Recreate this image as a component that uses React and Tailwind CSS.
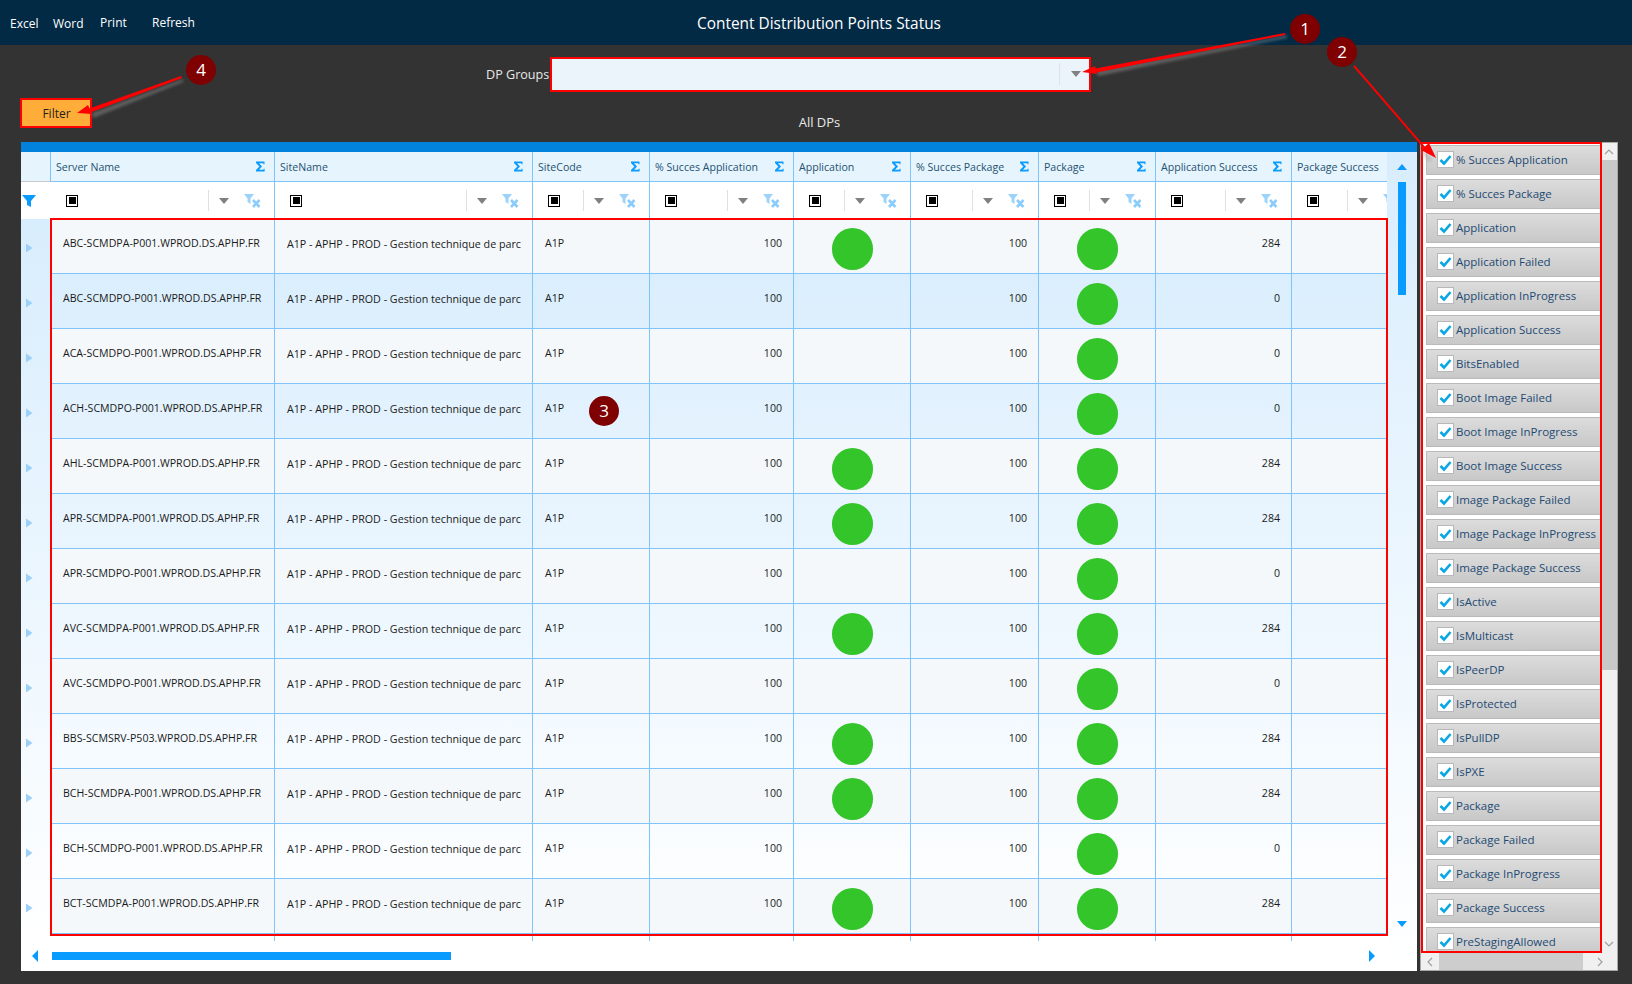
import React from "react";

const font = "font-['Open_Sans','Noto_Sans',sans-serif]";

const columns = [
  { name: "Server Name", width: "w-[224px]" },
  { name: "SiteName", width: "w-[258px]" },
  { name: "SiteCode", width: "w-[117px]" },
  { name: "% Succes Application", width: "w-[144px]" },
  { name: "Application", width: "w-[117px]" },
  { name: "% Succes Package", width: "w-[128px]" },
  { name: "Package", width: "w-[117px]" },
  { name: "Application Success", width: "w-[136px]" },
  { name: "Package Success", width: "w-[95px]", clip: true },
];

const servers = [
  ["ABC-SCMDPA-P001.WPROD.DS.APHP.FR", true, 284],
  ["ABC-SCMDPO-P001.WPROD.DS.APHP.FR", false, 0],
  ["ACA-SCMDPO-P001.WPROD.DS.APHP.FR", false, 0],
  ["ACH-SCMDPO-P001.WPROD.DS.APHP.FR", false, 0],
  ["AHL-SCMDPA-P001.WPROD.DS.APHP.FR", true, 284],
  ["APR-SCMDPA-P001.WPROD.DS.APHP.FR", true, 284],
  ["APR-SCMDPO-P001.WPROD.DS.APHP.FR", false, 0],
  ["AVC-SCMDPA-P001.WPROD.DS.APHP.FR", true, 284],
  ["AVC-SCMDPO-P001.WPROD.DS.APHP.FR", false, 0],
  ["BBS-SCMSRV-P503.WPROD.DS.APHP.FR", true, 284],
  ["BCH-SCMDPA-P001.WPROD.DS.APHP.FR", true, 284],
  ["BCH-SCMDPO-P001.WPROD.DS.APHP.FR", false, 0],
  ["BCT-SCMDPA-P001.WPROD.DS.APHP.FR", true, 284],
];

const choices = [
  "% Succes Application",
  "% Succes Package",
  "Application",
  "Application Failed",
  "Application InProgress",
  "Application Success",
  "BitsEnabled",
  "Boot Image Failed",
  "Boot Image InProgress",
  "Boot Image Success",
  "Image Package Failed",
  "Image Package InProgress",
  "Image Package Success",
  "IsActive",
  "IsMulticast",
  "IsPeerDP",
  "IsProtected",
  "IsPullDP",
  "IsPXE",
  "Package",
  "Package Failed",
  "Package InProgress",
  "Package Success",
  "PreStagingAllowed",
];

function Sigma() {
  return (
    <svg width="11" height="11" viewBox="0 0 11 11" className="shrink-0">
      <path d="M1 0.500h8.500v2.700H8.600L8.200 2.300H4l3 3.200-3 3.200h4.300l.4-.9h.9V10.500H1V9l3.400-3.500L1 2z" fill="#0a9bff" />
    </svg>
  );
}

function ClearFilter() {
  return (
    <svg width="18" height="14" viewBox="0 0 18 14" className="shrink-0">
      <path d="M0 0h10L6.500 4.500V10L3.500 8V4.500z" fill="#9bd3fb" />
      <path d="M9 6l6.500 7M15.500 6L9 13" stroke="#8cccfa" strokeWidth="2.600" />
    </svg>
  );
}

function Arrow({ dir, size = "w-3 h-3", color = "#0a9bff" }) {
  const pts = {
    up: "1,9 11,9 6,3",
    down: "1,3 11,3 6,9",
    left: "9,0 9,12 3,6",
    right: "3,0 3,12 9,6",
  };
  return (
    <svg viewBox="0 0 12 12" className={size}>
      <polygon points={pts[dir]} fill={color} />
    </svg>
  );
}

function Marker({ n, className }) {
  return (
    <div className={`absolute w-[30px] h-[30px] rounded-full bg-[#7f0000] text-white text-[17px] flex items-center justify-center ${className}`}>
      {n}
    </div>
  );
}

function HeaderCell({ col }) {
  return (
    <div className={`${col.width} shrink-0 h-[29px] flex items-center justify-between pl-[5px] pr-[8px] border-r border-[#7fc4fa] overflow-hidden last:border-r-0`}>
      <span className="text-[10.6px] text-[#25526f] whitespace-nowrap pt-[3px]">{col.name}</span>
      {!col.clip && <Sigma />}
    </div>
  );
}

function FilterCell({ col }) {
  return (
    <div className={`${col.width} shrink-0 h-[37px] flex items-center pl-[15px] border-r border-[#7fc4fa] overflow-hidden last:border-r-0`}>
      <div className="w-[12px] h-[12px] border-[1.5px] border-black p-[1.5px] shrink-0">
        <div className="w-full h-full bg-black" />
      </div>
      <div className="flex-1 min-w-0" />
      <div className="w-px h-[21px] bg-[#e0e0e0] shrink-0" />
      <div className="w-[35px] flex pl-[9px] shrink-0">
        <Arrow dir="down" size="w-[12px] h-[12px]" color="#808080" />
      </div>
      <div className={`${col.clip ? "w-[4px]" : "w-[30px]"} shrink-0 overflow-hidden`}>
        <ClearFilter />
      </div>
    </div>
  );
}

function Row({ row, odd }) {
  const [server, hasApp, success] = row;
  return (
    <div className={`flex h-[55px] shrink-0 border-b border-[#7fc4fa] text-[10.6px] text-[#1a1a1a] ${odd ? "bg-[#f4f8fa]" : ""}`}>
      <div className="w-[224px] shrink-0 border-r border-[#7fc4fa] pl-[12px] pt-[17px] whitespace-nowrap">{server}</div>
      <div className="w-[258px] shrink-0 border-r border-[#7fc4fa] pl-[12px] pt-[17px] whitespace-nowrap text-[10.7px]">A1P - APHP - PROD - Gestion technique de parc</div>
      <div className="w-[117px] shrink-0 border-r border-[#7fc4fa] pl-[12px] pt-[17px]">A1P</div>
      <div className="w-[144px] shrink-0 border-r border-[#7fc4fa] pr-[11px] pt-[17px] text-right">100</div>
      <div className="w-[117px] shrink-0 border-r border-[#7fc4fa] flex justify-center pt-[9px]">
        {hasApp && <div className="w-[41px] h-[42px] rounded-full bg-[#33c52a]" />}
      </div>
      <div className="w-[128px] shrink-0 border-r border-[#7fc4fa] pr-[11px] pt-[17px] text-right">100</div>
      <div className="w-[117px] shrink-0 border-r border-[#7fc4fa] flex justify-center pt-[9px]">
        <div className="w-[41px] h-[42px] rounded-full bg-[#33c52a]" />
      </div>
      <div className="w-[136px] shrink-0 border-r border-[#7fc4fa] pr-[11px] pt-[17px] text-right">{success}</div>
      <div className="w-[95px] shrink-0" />
    </div>
  );
}

function Choice({ label }) {
  return (
    <div className="h-[30px] shrink-0 mb-[4px] bg-gradient-to-b from-[#dcdcdc] to-[#c8c8c8] border border-[#bababa] flex items-center pl-[10px]">
      <div className="w-[17px] h-[17px] -mt-[1px] bg-white border border-[#b8b8b8] flex items-center justify-center shrink-0">
        <svg width="13" height="13" viewBox="0 0 13 13">
          <path d="M1.500 7l3.500 3.500L11.500 3" stroke="#08a6e4" strokeWidth="2.600" fill="none" />
        </svg>
      </div>
      <span className="ml-[2px] text-[11.5px] text-[#1d4a73] whitespace-nowrap">{label}</span>
    </div>
  );
}

export default function App() {
  return (
    <div className={`relative w-[1632px] h-[984px] bg-[#333333] overflow-hidden ${font}`}>
      {/* top bar */}
      <div className="h-[45px] bg-[#022a45] relative flex items-center justify-center pl-[6px] pt-[2px]">
        <div className="absolute left-[10px] top-[15px] flex items-start text-[12px] text-white">
          <span className="w-[43px]">Excel</span>
          <span className="w-[47px]">Word</span>
          <span className="w-[52px] -mt-[1px]">Print</span>
          <span className="-mt-[1px]">Refresh</span>
        </div>
        <span className="text-[15.4px] text-white">Content Distribution Points Status</span>
      </div>

      {/* dp groups */}
      <div className="flex items-start h-[46px] pt-[12px] pl-[486px]">
        <span className="w-[63px] mt-[9px] text-[12.6px] text-[#e8e8e8] whitespace-nowrap">DP Groups</span>
        <div className="ml-[1px] w-[540px] h-[34px] bg-[#ecf4fb] border-l border-white flex items-center justify-end pr-[8px]">
          <div className="w-px h-[22px] bg-[#dde2e6] mr-[10px]" />
          <Arrow dir="down" size="w-[12px] h-[12px]" color="#808080" />
        </div>
      </div>

      {/* filter + title */}
      <div className="relative h-[51px]">
        <button className="absolute left-[21px] top-[9px] w-[71px] h-[28px] bg-[#ffad39] text-[12px] text-[#222]">Filter</button>
        <div className="pt-[22px] pl-[7px] text-center text-[13px] text-[#e8e8e8]">All DPs</div>
      </div>

      <div className="flex pl-[21px] h-[829px]">
        {/* grid */}
        <div className="w-[1396px] h-full bg-white flex flex-col relative">
          <div className="h-[10px] bg-[#0382dd] shrink-0" />
          <div className="flex-1 flex min-h-0">
            <div className="w-[1366px] flex flex-col">
              <div className="flex bg-[#e6f4fe] border-b border-[#7fc4fa] shrink-0 h-[30px]">
                <div className="w-[30px] h-[30px] shrink-0 border-r border-[#7fc4fa] border-b border-b-[#c8c8c8]" />
                {columns.map((c) => (
                  <HeaderCell key={c.name} col={c} />
                ))}
              </div>
              <div className="flex shrink-0 h-[37px] bg-white">
                <div className="w-[30px] shrink-0 flex items-center pl-[1px]">
                  <svg width="14" height="12" viewBox="0 0 14 12">
                    <path d="M0 0h14L9 6v6L5 10V6z" fill="#0a9bff" />
                  </svg>
                </div>
                {columns.map((c) => (
                  <FilterCell key={c.name} col={c} />
                ))}
              </div>
              <div className="h-[722px] overflow-hidden flex bg-gradient-to-b from-[#d8edfd] to-white">
                <div className="w-[30px] shrink-0 flex flex-col">
                  {servers.map((s) => (
                    <div key={s[0]} className="h-[55px] shrink-0 flex items-center pl-[2px]">
                      <svg width="12" height="12" viewBox="0 0 12 12" className="mt-[3px]">
                        <polygon points="3,1.500 3,10.500 9.500,6" fill="#9dd0f8" />
                      </svg>
                    </div>
                  ))}
                </div>
                <div className="flex-1 flex flex-col">
                  {servers.map((s, i) => (
                    <Row key={s[0]} row={s} odd={i % 2 === 0} />
                  ))}
                  <div className="flex h-[55px] shrink-0">
                    {columns.map((c) => (
                      <div key={c.name} className={`${c.width} shrink-0 border-r border-[#7fc4fa] last:border-r-0`} />
                    ))}
                  </div>
                </div>
              </div>
              <div className="flex-1 flex items-center pl-[8px] bg-white">
                <Arrow dir="left" size="w-[12px] h-[12px]" />
                <div className="ml-[11px] w-[399px] h-[8px] bg-[#0a9bff]" />
                <div className="ml-[915px]">
                  <Arrow dir="right" size="w-[12px] h-[12px]" />
                </div>
              </div>
            </div>
            <div className="flex-1 bg-gradient-to-b from-[#d8edfd] to-white flex flex-col items-center pt-[9px]">
              <Arrow dir="up" size="w-[12px] h-[12px]" />
              <div className="mt-[9px] w-[8px] h-[113px] bg-[#0a9bff]" />
              <div className="flex-1" />
              <div className="mb-[41px] flex">
                <Arrow dir="down" size="w-[12px] h-[12px]" />
              </div>
            </div>
          </div>
        </div>

        {/* column chooser */}
        <div className="ml-[3px] w-[198px] h-full bg-white border border-[#a8a8a8] flex flex-col">
          <div className="flex-1 min-h-0 flex">
            <div className="w-[180px] pl-[5px] pt-[2px] overflow-hidden flex flex-col h-[811px]">
              {choices.map((c) => (
                <Choice key={c} label={c} />
              ))}
            </div>
            <div className="flex-1 bg-[#f0f0f0] flex flex-col">
              <div className="h-[17px] flex items-center justify-center">
                <svg width="10" height="6" viewBox="0 0 10 6"><path d="M1 5l4-4 4 4" stroke="#a0a0a0" fill="none" strokeWidth="1.200" /></svg>
              </div>
              <div className="h-[510px] bg-[#c8c8c8]" />
              <div className="flex-1" />
              <div className="h-[18px] flex items-center justify-center">
                <svg width="10" height="6" viewBox="0 0 10 6"><path d="M1 1l4 4 4-4" stroke="#a0a0a0" fill="none" strokeWidth="1.200" /></svg>
              </div>
            </div>
          </div>
          <div className="h-[17px] bg-[#f0f0f0] flex items-center shrink-0">
            <div className="w-[18px] flex justify-center">
              <svg width="6" height="10" viewBox="0 0 6 10"><path d="M5 1L1 5l4 4" stroke="#a0a0a0" fill="none" strokeWidth="1.200" /></svg>
            </div>
            <div className="w-[144px] h-full bg-[#cdcdcd]" />
            <div className="flex-1 flex justify-center">
              <svg width="6" height="10" viewBox="0 0 6 10"><path d="M1 1l4 4-4 4" stroke="#a0a0a0" fill="none" strokeWidth="1.200" /></svg>
            </div>
          </div>
        </div>
      </div>

      {/* annotations */}
      <div className="absolute left-[550px] top-[57px] w-[541px] h-[35px] border-[2.5px] border-[#ff0000]" />
      <div className="absolute left-[20px] top-[98px] w-[72px] h-[30px] border-[2.5px] border-[#ff0000]" />
      <div className="absolute left-[50px] top-[218px] w-[1338px] h-[718px] border-[2.5px] border-[#ff0000]" />
      <div className="absolute left-[1421px] top-[142px] w-[181px] h-[811px] border-[2.5px] border-[#ff0000]" />
      <svg className="absolute inset-0 pointer-events-none" width="1632" height="984" viewBox="0 0 1632 984">
        <g fill="#9a9a9a" fillOpacity="0.45" className="blur-[1.5px]">
          <polygon points="1287,35 1096,71 1098,76 1287,38" />
          <polygon points="1424,150 1432,160 1429,162 1421,152" />
          <polygon points="183,79 92,113 93,118 183,82" />
        </g>
        <g fill="#ff0000">
          <polygon points="1285,33 1093,69 1094,73 1285,35" />
          <polygon points="1082,72 1095,66 1097,74" />
          <polygon points="1354.700,65.300 1425.500,147.200 1424,148.600 1353.200,66.600" />
          <polygon points="1436,158 1421,150 1429,143" />
          <polygon points="181,76 88,109 89,113 182,78" />
          <polygon points="77,113 88,105 92,114" />
        </g>
      </svg>
      <Marker n="1" className="left-[1290px] top-[14px]" />
      <Marker n="2" className="left-[1327px] top-[37px]" />
      <Marker n="3" className="left-[589px] top-[396px]" />
      <Marker n="4" className="left-[186px] top-[55px]" />
    </div>
  );
}
